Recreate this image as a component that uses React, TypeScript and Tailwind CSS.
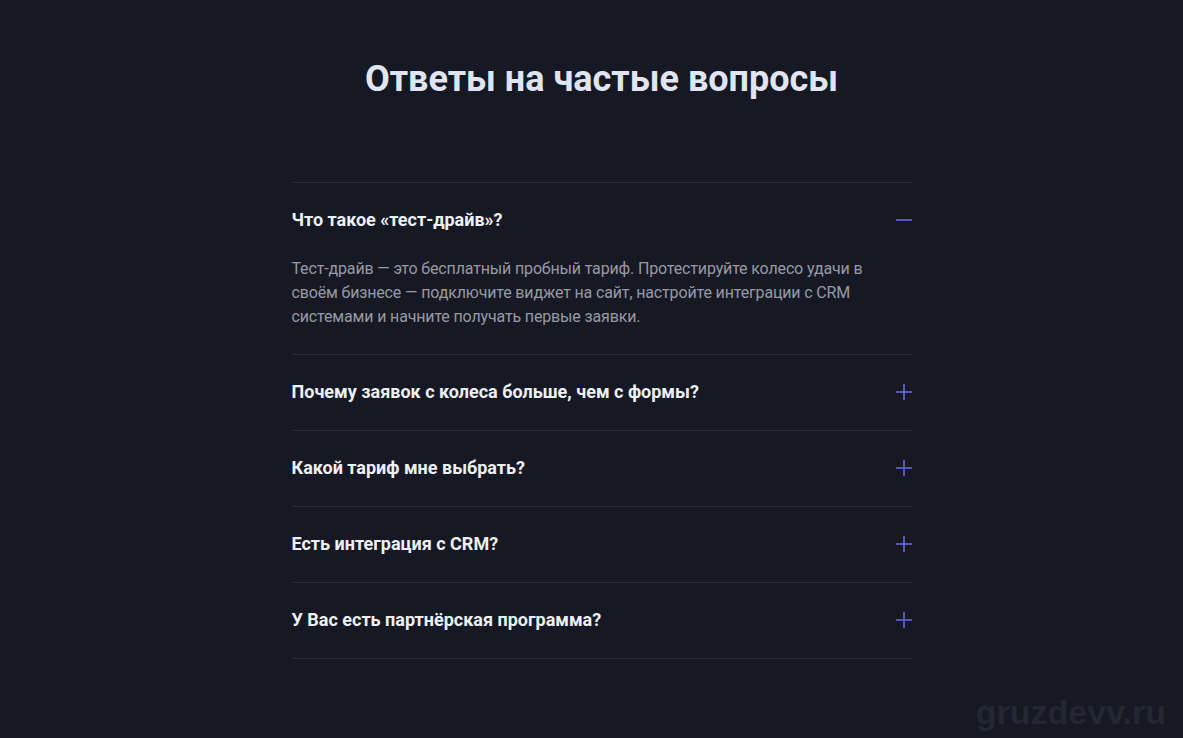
import React, { useState } from "react";

const items = [
  {
    q: "Что такое «тест-драйв»?",
    a: "Тест-драйв — это бесплатный пробный тариф. Протестируйте колесо удачи в своём бизнесе — подключите виджет на сайт, настройте интеграции с CRM системами и начните получать первые заявки.",
  },
  { q: "Почему заявок с колеса больше, чем с формы?", a: "" },
  { q: "Какой тариф мне выбрать?", a: "" },
  { q: "Есть интеграция с CRM?", a: "" },
  { q: "У Вас есть партнёрская программа?", a: "" },
];

function Toggle({ open }: { open: boolean }) {
  return (
    <svg width="16" height="16" viewBox="0 0 16 16" className="shrink-0">
      <path d="M0 8h16" stroke="#5f64d4" strokeWidth="1.7" />
      {!open && <path d="M8 0v16" stroke="#5f64d4" strokeWidth="1.7" />}
    </svg>
  );
}

export default function App() {
  const [open, setOpen] = useState(0);
  return (
    <div
      className="relative min-h-[738px] w-full overflow-hidden bg-[#161923] pt-[56px] pl-[20px]"
      style={{ fontFamily: "Roboto, 'Noto Sans', sans-serif" }}
    >
      <h2 className="text-center text-[36px] font-bold leading-[46px] text-[#e1e4f2]">
        Ответы на частые вопросы
      </h2>
      <div className="mx-auto mt-[80px] w-[620px] border-t border-[#2a2d38]">
        {items.map((it, i) => (
          <div key={i} className="border-b border-[#2a2d38]">
            <button
              className="flex w-full items-center justify-between pt-[25px] pb-[26px] text-left"
              onClick={() => setOpen(open === i ? -1 : i)}
            >
              <span className="text-[18px] font-bold leading-[24px] text-[#eef0f7]">{it.q}</span>
              <Toggle open={open === i} />
            </button>
            {open === i && it.a && (
              <p className="-mt-[1px] pb-[25px] text-[16px] leading-[24px] tracking-[-0.15px] text-[#9799a3]">
                {it.a}
              </p>
            )}
          </div>
        ))}
      </div>
      <div
        className="absolute right-[17px] bottom-[9px] text-[34px] font-bold leading-none text-[#232633]"
        style={{ fontFamily: "'Liberation Sans', Arial, sans-serif" }}
      >
        gruzdevv.ru
      </div>
    </div>
  );
}
